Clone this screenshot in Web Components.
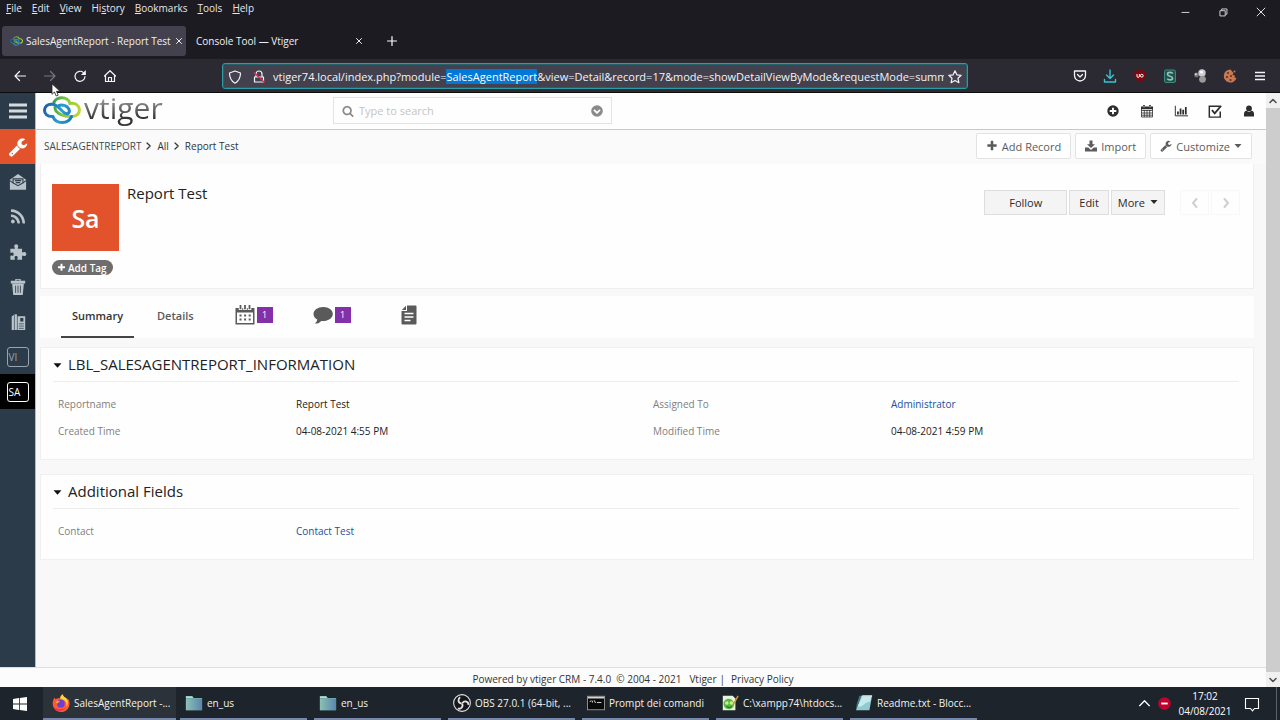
<!DOCTYPE html>
<html lang="en">
<head>
<meta charset="utf-8">
<title>SalesAgentReport - Report Test</title>
<style>
html,body{margin:0;height:100%}
body{font-family:"Open Sans","Noto Sans",sans-serif;font-size:10px;background:#1c1b22;overflow:hidden}
</style>
</head>
<body>
<desktop-screen></desktop-screen>
<script>
const RESET = `*{box-sizing:border-box}
button,input{font:inherit;color:inherit;background:none;border:0;padding:0;margin:0;white-space:nowrap}
a{color:inherit;text-decoration:none}`;

function define(name, css, html, init) {
  const tpl = document.createElement('template');
  tpl.innerHTML = `<style>${RESET}${css}</style>${html}`;
  customElements.define(name, class extends HTMLElement {
    constructor() {
      super();
      this.attachShadow({ mode: 'open' }).append(tpl.content.cloneNode(true));
    }
    connectedCallback() { if (init) init.call(this, this.shadowRoot); }
  });
}

const line = (d, w = 1.4) => `<path d="${d}" fill="none" stroke="currentColor" stroke-width="${w}" stroke-linecap="round" stroke-linejoin="round"/>`;
/* name: [viewBox, markup] */
const ICONS = {
  min: ['0 0 16 16', '<path d="M4 8.500h9" stroke="currentColor"/>'],
  restore: ['0 0 16 16', '<path d="M4.500 6.500h6v6h-6zM6.500 6V4.500h6v6H11" fill="none" stroke="currentColor"/>'],
  close: ['0 0 16 16', line('M3.500 3.500l9 9M12.500 3.500l-9 9', 1.1)],
  tabclose: ['0 0 16 16', line('M5.500 5.500l5 5M10.500 5.500l-5 5', 1)],
  add: ['0 0 16 16', line('M8 3.500v9M3.500 8h9', 1.2)],
  back: ['0 0 16 16', line('M13.500 8H3M7.500 3.500L3 8l4.500 4.500', 1.2)],
  forward: ['0 0 16 16', line('M2.500 8H13M8.500 3.500L13 8l-4.500 4.500', 1.2)],
  reload: ['0 0 16 16', line('M13 8.500a5 5 0 1 1-1.600-3.900L13 6', 1.2) + '<path d="M13.800 2v5H9z" fill="currentColor"/>'],
  home: ['0 0 16 16', line('M2.500 8L8 2.700 13.500 8M3.500 7.300v6.200h9V7.300M6.500 13V9.500h3V13', 1.2)],
  shield: ['0 0 16 16', line('M8 2l5.500 2c0 5-1.500 8-5.500 10.200C4 12 2.500 9 2.500 4z', 1.2)],
  lock: ['0 0 16 16', line('M3.500 8h9v5h-9zM5 8V5a3 3 0 0 1 6 0v3', 1.2) + '<path d="M3 3.500L13.500 13.500" stroke="#e22850" stroke-width="1.400"/>'],
  star: ['0 0 16 16', line('M8 1.800l1.900 4 4.300.5-3.200 3 .9 4.400L8 11.500l-3.900 2.200.9-4.400-3.200-3 4.300-.5z', 1.2)],
  pocket: ['0 0 16 16', line('M2.500 3h11v4.500a5.500 5.500 0 0 1-11 0zM5.500 6.500L8 9l2.500-2.500', 1.3)],
  dl: ['0 0 16 16', line('M8 2v8M4.500 7L8 10.500 11.500 7M2.500 11.500V14h11v-2.500', 1.4)],
  ublock: ['0 0 16 16', '<path d="M8 1.500l5.800 2c0 6-1.300 8.500-5.800 11-4.500-2.500-5.800-5-5.800-11z" fill="#800610"/><path d="M5 6v2.200a1 1 0 0 0 2.400 0V6" fill="none" stroke="#fff"/><circle cx="9.800" cy="7.700" r="1.400" fill="none" stroke="#fff"/>'],
  stylus: ['0 0 16 16', '<rect x="2.500" y="2" width="11" height="12.500" rx="1.500" fill="#24504f" stroke="#3f8a80"/><path d="M10.800 5.500Q10 4.300 8 4.300 5.500 4.300 5.500 6.200C5.500 8.700 10.600 7.800 10.600 10.200 10.600 12.300 6.300 12.400 5.300 10.600" fill="none" stroke="#8fc6ba" stroke-width="1.700"/>'],
  balls: ['0 0 16 16', '<circle cx="4.500" cy="7" r="2.400" fill="#777"/><circle cx="3.900" cy="6.300" r="1" fill="#ddd"/><circle cx="10" cy="5" r="3.700" fill="#ccc"/><circle cx="10.500" cy="11.300" r="3.400" fill="#9a9a9a"/><circle cx="9.500" cy="4.200" r="1.400" fill="#fff"/>'],
  cookie: ['0 0 16 16', '<path d="M8.500 1.500a6.500 6.500 0 1 0 6 8.500l-2-.5.500-2-2.500-.5 1-2z" fill="#c87952"/><circle cx="12.500" cy="3.500" r="1" fill="#c87952"/><g fill="#5b3024"><circle cx="6" cy="5" r="1"/><circle cx="5" cy="9" r="1.100"/><circle cx="9" cy="8" r="1"/><circle cx="8.500" cy="12" r="1.100"/></g>'],
  burger: ['0 0 16 16', '<path d="M3 4.500h10M3 8h10M3 11.500h10" stroke="currentColor" stroke-width="1.300"/>'],
  menu: ['0 0 18 18', '<path d="M0 3h18M0 9h18M0 15h18" stroke="currentColor" stroke-width="2.800"/>'],
  wrench: ['0 0 1792 1792', '<path fill="currentColor" d="M448 1472q0-26-19-45t-45-19-45 19-19 45 19 45 45 19 45-19 19-45zm644-420l-682 682q-37 37-90 37-52 0-91-37l-106-108q-38-36-38-90 0-53 38-91l681-681q39 98 114.500 173.500t173.500 114.500zm634-435q0 39-23 106-47 134-164.500 217.500t-258.500 83.500q-185 0-316.500-131.500t-131.500-316.500 131.500-316.500 316.500-131.500q58 0 121.500 16.500t107.500 46.500q16 11 16 28t-16 28l-293 169v224l193 107q5-3 79-48.500t135.500-81 70.500-35.500q15 0 23.500 10t8.500 25z"/>'],
  mail: ['0 0 20 20', '<path fill="currentColor" d="M1 7.500L10 1l9 6.500v11H1z"/><path d="M4.500 6.500h11v4.500L10 14l-5.500-3z" fill="currentColor" stroke="#2c3b49" stroke-width="1.200"/><path d="M6.500 8.500h7M7.500 10.700h5M1 8.500l3.500 2.500M19 8.500L15.500 11" fill="none" stroke="#2c3b49" stroke-width="1.200"/>'],
  rss: ['0 0 1792 1792', '<path fill="currentColor" d="M576 1344q0 80-56 136t-136 56-136-56-56-136 56-136 136-56 136 56 56 136zm512 123q2 28-17 48-18 21-47 21h-135q-25 0-43-16.500t-20-41.500q-22-229-184.500-391.500t-391.500-184.500q-25-2-41.500-20t-16.500-43v-135q0-29 21-47 17-17 43-17h5q160 13 306 80.500t259 181.500q114 113 181.500 259t80.500 306zm512 2q2 27-18 47-18 20-46 20h-143q-26 0-44.500-17.500t-19.500-42.500q-12-215-101-408.500t-231.500-336-336-231.500-408.500-102q-25-1-42.500-19.500t-17.500-43.500v-143q0-28 20-46 18-18 44-18h3q262 13 501.500 120t425.500 294q187 186 294 425.500t120 501.500z"/>'],
  puzzle: ['0 0 20 20', '<path fill="currentColor" d="M1.500 6.500h4.300c.8 0 .9-.6.500-1.300C5.200 3 6.300 1.500 8 1.500S10.800 3 9.900 5c-.4.900-.2 1.500.6 1.500h4v3.300c0 .9.700 1 1.400.6 1.600-1 3.300-.1 3.300 1.800s-1.700 2.900-3.300 1.900c-.7-.4-1.400-.3-1.400.5v4H10c-.9 0-1-.6-.6-1.400.7-1.600-.1-2.700-1.500-2.700s-2.200 1.100-1.500 2.700c.4.800.2 1.400-.6 1.400H1.500v-4c0-.8.600-1 1.300-.7 1.300.6 2.400-.1 2.400-1.500S4.100 10.200 2.800 10.900c-.7.400-1.300.2-1.300-.7z"/>'],
  trash: ['0 0 20 20', '<path fill="currentColor" d="M2 3h5V1h6v2h5v3H2zM3.500 6.500h13L15.300 19H4.700z"/><path d="M7.300 8.500v8M10 8.500v8M12.700 8.500v8" stroke="#2c3b49" stroke-width=".9"/><path d="M8.300 2.500h3.400" stroke="#2c3b49"/>'],
  docs: ['0 0 20 20', '<path fill="currentColor" d="M3 4l2.500-2v17H3zM6.200 1.500h2.600V19H6.200zM9.500 3.500H18V19H9.500z"/><path d="M11 12h5.500M11 14.500h5.500M11 17h5.500" stroke="#2c3b49" stroke-width=".8"/><path d="M12.500 5.500h3.500v4h-3.500z" fill="#2c3b49"/>'],
  search: ['0 0 1792 1792', '<path fill="currentColor" d="M1216 832q0-185-131.500-316.500t-316.500-131.500-316.500 131.500-131.500 316.500 131.500 316.500 316.500 131.500 316.500-131.500 131.500-316.500zm512 832q0 52-38 90t-90 38q-54 0-90-38l-343-342q-179 124-399 124-143 0-273.500-55.500t-225-150-150-225-55.500-273.500 55.500-273.500 150-225 225-150 273.500-55.500 273.500 55.500 225 150 150 225 55.500 273.500q0 220-124 399l343 343q37 37 37 90z"/>'],
  down: ['0 0 12 12', '<circle cx="6" cy="6" r="5.800" fill="currentColor"/><path d="M3 4.800L6 7.800l3-3" fill="none" stroke="#fff" stroke-width="1.800"/>'],
  pluscircle: ['0 0 12 12', '<circle cx="6" cy="6" r="5.700" fill="currentColor"/><path d="M6 2.700v6.600M2.700 6h6.600" stroke="#fff" stroke-width="1.900"/>'],
  calgrid: ['0 0 14 14', '<path d="M1.500 3.500h11v9.500h-11zM1.500 6.500h11M1.500 9h11M1.500 11.200h11M4.300 6v7M7 6v7M9.700 6v7" fill="none" stroke="currentColor" stroke-width=".8"/><path d="M1 2.500h12v2.700H1z" fill="currentColor"/><path d="M4 1v3M10 1v3" stroke="currentColor" stroke-width="2"/><path d="M4 1.500v2M10 1.500v2" stroke="#fff" stroke-width=".8"/>'],
  chart: ['0 0 16 14', '<path d="M1.500 1v11.500H16" fill="none" stroke="currentColor" stroke-width="1.100"/><path d="M4.500 11V7.500M7.500 11V4M10.500 11V5.500M13.500 11V2.500" stroke="currentColor" stroke-width="2"/>'],
  check: ['0 0 16 16', '<path d="M14 8.500V15H1.500V2.500h12" fill="none" stroke="currentColor" stroke-width="1.700"/><path d="M4.500 7l3.200 3.700L15 2" fill="none" stroke="currentColor" stroke-width="2.100"/>'],
  user: ['0 0 12 12', '<circle cx="6" cy="3.400" r="2.900" fill="currentColor"/><path d="M1 11.500V9q0-3 2.500-3.200Q6 8 8.500 5.800 11 6 11 9v2.500z" fill="currentColor"/>'],
  plus: ['0 0 1792 1792', '<path fill="currentColor" d="M1600 736v192q0 40-28 68t-68 28h-416v416q0 40-28 68t-68 28h-192q-40 0-68-28t-28-68v-416h-416q-40 0-68-28t-28-68v-192q0-40 28-68t68-28h416v-416q0-40 28-68t68-28h192q40 0 68 28t28 68v416h416q40 0 68 28t28 68z"/>'],
  import: ['0 0 12 12', '<path fill="currentColor" d="M4.500.5h3v3.800H10L6 8 2 4.300h2.500zM0 7.500h3.300L6 10l2.700-2.500H12v4H0z"/>'],
  caret: ['0 0 8 8', '<path fill="currentColor" d="M.5 2h7L4 6z"/>'],
  left: ['0 0 12 12', line('M7.500 2L4 6l3.500 4', 2)],
  right: ['0 0 12 12', line('M4.500 2L8 6l-3.500 4', 2)],
  crumb: ['0 0 8 10', line('M2 2l3.200 3L2 8', 1.2)],
  calendar: ['0 0 20 20', '<path fill="currentColor" d="M.5 3h19v16.500H.5z"/><path fill="#fff" d="M2 7.500h16V18H2z"/><path d="M5.500.5v4.500M10 .5v4.500M14.500.5v4.500" stroke="#fff" stroke-width="3.600"/><path d="M5.500 0v4.300M10 0v4.300M14.500 0v4.300" stroke="currentColor" stroke-width="1.800"/><path d="M4.500 10.500h11.500M4.500 14.500h11.500" stroke="currentColor" stroke-width="2" stroke-dasharray="2 2.600"/>'],
  comment: ['0 0 20 20', '<path fill="currentColor" d="M10.300 2C4.800 2 .5 5 .5 9c0 2.400 1.500 4.400 3.700 5.600-.2 1.700-1 2.900-2.200 3.900 3 0 5-1 6.200-2.600 6.200.8 11.600-2.400 11.600-6.900C19.800 5 15.700 2 10.300 2z"/>'],
  document: ['0 0 16 20', '<path fill="currentColor" d="M6 .5h8.500q1 0 1 1v17q0 1-1 1h-13q-1 0-1-1V6H6z"/><path fill="currentColor" d="M.8 5L5 .8V5z"/><path d="M3.500 8.500h9M3.500 12h9M3.500 15.500h6" stroke="#fff" stroke-width="1.600"/>'],
  up: ['0 0 12 12', line('M1.500 8L6 3.500 10.500 8', 1.200)],
  sdown: ['0 0 12 12', line('M3 4.500L6 7.500l3-3', 1.6)],
  sup: ['0 0 12 12', line('M3 7.500L6 4.500l3 3', 1.6)],
  win: ['0 0 16 16', '<path fill="#fff" d="M1 3l6-.9v5.500H1zM7.800 2L15 1v6.600H7.800zM1 8.400h6v5.500L1 13zM7.800 8.400H15V15l-7.200-1z"/>'],
  firefox: ['0 0 20 20', '<path fill="#ff5a36" d="M3 4c.2 1 .6 1.600 1.200 2C6 4.500 8 4.500 9 5c0-2 1.500-3.800 3-4.800.3 1.900 1.300 2.800 2.800 3.800.9.600 1.700 1.300 2.100 2.300.4-.3.600-.9.500-1.500C20 8 20 12 18.500 15A9.500 9.500 0 0 1 1.300 14C.2 11 .8 6.500 3 4z"/><path fill="#ffd43a" d="M12 .2c.3 1.900 1.300 2.800 2.800 3.800 3.200 2.200 4 7 1.200 10.500 1-4-1-7.500-4-8.500-1.300-.4-2.400-.5-3-1 0-2 1.500-3.800 3-4.800z"/><path fill="#f0246b" d="M1.300 14c3 3 8.200 4.500 13 1.500-2 3.500-9 5.500-13-1.500z"/><circle cx="9.800" cy="10.800" r="4.300" fill="#6b3fd4"/><path fill="#ffa21f" d="M4.500 8c1.500-.8 3-.5 4.500.3-.7 1-2.300.8-2.600 2.200C5 10.500 4.300 9.500 4.500 8z"/>'],
  folder: ['0 0 20 18', '<defs><linearGradient id="f"><stop offset="0" stop-color="#8cc0b4"/><stop offset="1" stop-color="#5a86b0"/></linearGradient></defs><path fill="#6fa8a6" d="M1 1.500h7l1.500 2H19V17H1z"/><path fill="#b5dcd2" d="M1 1.500h7l1.500 2H1z"/><path fill="url(#f)" d="M1 4.500h18V17H1z"/>'],
  obs: ['0 0 20 20', '<circle cx="10" cy="10" r="9.300" fill="#17171b" stroke="#e4e4e4" stroke-width="1.200"/><path d="M9.500 10.500C5 10 5.500 5 8 3.500M10.500 10c2.500-3.500 7-1 6.500 2M10 10.500c2 3.500-1.500 7-4.500 5.500" fill="none" stroke="#e4e4e4" stroke-width="2"/>'],
  cmd: ['0 0 20 16', '<rect x=".5" y=".5" width="19" height="15" fill="#0a0a0a" stroke="#9a9a9a"/><path fill="#d5d5d5" d="M1 1h18v2H1z"/><path d="M3 6.500l2-1M6 5.500v2M8 5l1.500 3M11 7.500h5" stroke="#eee"/>'],
  notepadpp: ['0 0 20 20', '<path fill="#e8f2dd" d="M2 2h11l3 3v13H2z"/><path fill="#58b947" d="M3 9c2-5 9-5 11 0 2 4-1 8-5 8s-7-3-6-8z"/><circle cx="6.500" cy="10" r="2" fill="#c9f08a"/><circle cx="11.500" cy="10" r="2" fill="#c9f08a"/><path d="M6 14q3 2 6 0" stroke="#1d5a1d" fill="none"/><path d="M19 2l-6 11" stroke="#c99a3a" stroke-width="1.600"/>'],
  notepad: ['0 0 20 20', '<path fill="#8fcbd0" d="M7 2h12l-3 16H1z"/><path fill="#c7e9ea" d="M8 3h10l-1 5q-5 1-10 6H3z"/><path fill="#3f7d8c" d="M7 2L1 18l1-7 3-9z"/><path d="M8 2.200h11" stroke="#e9e9e9" stroke-width="1.500"/>'],
  stop: ['0 0 14 14', '<circle cx="7" cy="7" r="6.800" fill="#c2002f"/><path d="M3.500 7h7" stroke="#fff" stroke-width="2"/>'],
  note: ['0 0 16 16', '<path d="M1.500 2.500h13v10h-4l-2 2.300-2-2.300h-5z" fill="none" stroke="currentColor" stroke-width="1.100"/>'],
  cursor: ['0 0 10 14', '<path d="M1 .8v10.500l2.500-2.300 1.700 4 2-.8-1.700-3.900H9z" fill="#fff" stroke="#222" stroke-width=".8"/>'],
  cloud: ['0 0 38 28', `<defs><linearGradient id="a" gradientUnits="userSpaceOnUse" x1="1" x2="29" y1="12" y2="22"><stop offset="0" stop-color="#1a5fa8"/><stop offset=".6" stop-color="#2a9fd2"/><stop offset="1" stop-color="#1d78b8"/></linearGradient><linearGradient id="b" gradientUnits="userSpaceOnUse" x1="9" x2="36" y1="6" y2="12"><stop offset="0" stop-color="#2f9b4e"/><stop offset=".5" stop-color="#8cc63f"/><stop offset="1" stop-color="#bcd530"/></linearGradient></defs>
  <g fill="none" stroke-width="3" stroke-linecap="round"><path stroke="url(#b)" d="M10.500 8C12 .2 24.500-.5 27 7.500 38.500 5.500 39.500 20 29.500 20.500 22 21 12 18 12 11.500"/><path stroke="url(#a)" d="M10 20.500C12.500 28.500 25.500 28.500 28.500 20.500M10 20.500C-1.500 21.500-1 7 9.500 8.300 17 9 20 19.500 25 17.500 28 15.500 25.500 10.500 21.500 9.500 18 8.500 15.500 9.500 14.500 10.500"/></g>`]
};
customElements.define('ui-icon', class extends HTMLElement {
  static get observedAttributes() { return ['name']; }
  constructor() { super(); this.attachShadow({ mode: 'open' }); }
  attributeChangedCallback(attr, old, name) {
    const [box, art] = ICONS[name];
    this.shadowRoot.innerHTML = `<style>:host{display:inline-block;flex:none;width:16px;height:16px}svg{display:block;width:100%;height:100%}</style><svg viewBox="${box}" aria-hidden="true">${art}</svg>`;
  }
});

/* ---------- browser chrome ---------- */
define('menu-bar', `
:host{display:flex;justify-content:space-between;height:24px;color:#e6e6ea;font-size:10px;line-height:16px}
nav{display:flex;gap:10px;padding-left:6px;align-items:flex-start}
.win{display:flex}.win button{width:38px;height:24px;display:grid;place-items:center}
.win ui-icon{width:14px;height:14px}`, `
<nav><button><u>F</u>ile</button><button><u>E</u>dit</button><button><u>V</u>iew</button><button>Hi<u>s</u>tory</button><button><u>B</u>ookmarks</button><button><u>T</u>ools</button><button><u>H</u>elp</button></nav>
<div class="win"><button aria-label="Minimize"><ui-icon name="min"></ui-icon></button><button aria-label="Restore"><ui-icon name="restore"></ui-icon></button><button aria-label="Close"><ui-icon name="close"></ui-icon></button></div>`);

define('browser-tab', `
:host{display:flex;align-items:center;width:184px;height:30px;padding:0 5px 0 8px;border-radius:3px;color:#f0f0f4;font-size:10px}
:host([active]){background:#42414d}
span{flex:1;white-space:nowrap}
::slotted(ui-icon){margin-right:3px}
button{width:16px;height:16px}`, `<slot name="icon"></slot><span><slot></slot></span><button aria-label="Close tab"><ui-icon name="tabclose"></ui-icon></button>`);

define('tab-strip', `
:host{display:flex;align-items:center;gap:2px;height:35px;padding:2px 2px 3px;color:#fbfbfe}
.fav{width:13px;height:12px}.new{width:36px;height:16px;display:grid;place-items:center}`, `
<browser-tab active><ui-icon slot="icon" class="fav" name="cloud"></ui-icon>SalesAgentReport - Report Test</browser-tab>
<browser-tab>Console Tool — Vtiger</browser-tab>
<button class="new" aria-label="New tab"><ui-icon name="add"></ui-icon></button>`);

define('url-field', `
:host{display:flex;align-items:center;height:26px;padding:1px 4px 0;border:1px solid #2b9da6;outline:1px solid #24626b;outline-offset:-2px;border-radius:3px;background:#42414d;color:#f4f4f8}
ui-icon+ui-icon{margin:0 6px 0 8px}
input{flex:1;min-width:0;height:20px;margin-right:3px;font-size:11px;outline:0;caret-color:transparent}
input::selection{background:#0078d7;color:#fff}`, `
<ui-icon name="shield"></ui-icon><ui-icon name="lock"></ui-icon>
<input type="text" aria-label="Address" spellcheck="false" value="vtiger74.local/index.php?module=SalesAgentReport&amp;view=Detail&amp;record=17&amp;mode=showDetailViewByMode&amp;requestMode=summary">
<ui-icon name="star"></ui-icon>`, function (root) {
  const input = root.querySelector('input');
  const from = input.value.indexOf('SalesAgentReport');
  input.focus({ preventScroll: true });
  input.setSelectionRange(from, from + 'SalesAgentReport'.length);
});

define('browser-toolbar', `
:host{display:flex;align-items:center;height:34px;padding:1px 5px 0;background:#2b2a33;border-bottom:1px solid #0c0c0d;color:#f4f4f8;position:relative}
.group{display:flex}.group button{width:30px;height:26px;display:grid;place-items:center}
.off{color:#77767f}.teal{color:#31c8d4}
url-field{flex:1;margin:0 97px}
.pointer{position:absolute;left:51px;top:24px;width:10px;height:14px;z-index:3}`, `
<div class="group"><button aria-label="Back"><ui-icon name="back"></ui-icon></button><button class="off" aria-label="Forward"><ui-icon name="forward"></ui-icon></button><button aria-label="Reload"><ui-icon name="reload"></ui-icon></button><button aria-label="Home"><ui-icon name="home"></ui-icon></button></div>
<url-field></url-field>
<div class="group"><button aria-label="Pocket"><ui-icon name="pocket"></ui-icon></button><button class="teal" aria-label="Downloads"><ui-icon name="dl"></ui-icon></button><button aria-label="Blocker"><ui-icon name="ublock"></ui-icon></button><button aria-label="Styles"><ui-icon name="stylus"></ui-icon></button><button aria-label="Extension"><ui-icon name="balls"></ui-icon></button><button aria-label="Cookies"><ui-icon name="cookie"></ui-icon></button><button aria-label="Menu"><ui-icon name="burger"></ui-icon></button></div>
<ui-icon class="pointer" name="cursor"></ui-icon>`);

/* ---------- CRM ---------- */
define('crm-sidebar', `
:host{display:flex;flex-direction:column;width:36px;background:#2c3b49;border-right:1px solid #b4bbc1;color:#b9c3ca}
a{height:35px;display:grid;place-items:center}
.menu{height:36px;color:#d3dbe0}
ui-icon{width:18px;height:18px}
.on{background:#e2532b;color:#fff}.on ui-icon{width:20px;height:20px}
.now{background:#000;color:#fff}
b{width:22px;height:20px;border:1px solid currentColor;border-radius:3px;font:10px/18px "Open Sans",sans-serif;padding-left:1px}
.dim{color:#98a4ae}`, `
<a class="menu" href="#menu" aria-label="Menu"><ui-icon name="menu"></ui-icon></a><a class="on" href="#tools" aria-label="Tools"><ui-icon name="wrench"></ui-icon></a><a href="#mail" aria-label="Mail"><ui-icon name="mail"></ui-icon></a><a href="#rss" aria-label="RSS"><ui-icon name="rss"></ui-icon></a><a href="#ext" aria-label="Extensions"><ui-icon name="puzzle"></ui-icon></a><a href="#bin" aria-label="Recycle bin"><ui-icon name="trash"></ui-icon></a><a href="#docs" aria-label="Templates"><ui-icon name="docs"></ui-icon></a><a class="dim" href="#vi"><b>VI</b></a><a class="now" href="#sa"><b>SA</b></a>`);

define('crm-header', `
:host{display:flex;align-items:center;height:37px;background:#fefefe;border-bottom:1px solid #a8dcb8;padding:0 0 1px 7px;color:#2d2d2d}
.logo{display:flex;align-items:center;width:290px;gap:3px}
.logo ui-icon{width:38px;height:28px;margin-bottom:2px}
.logo span{font-size:30px;font-weight:500;line-height:36px;margin-top:-6px;background:linear-gradient(#999 25%,#333 80%);background-clip:text;-webkit-background-clip:text;color:transparent}
.search{display:flex;align-items:center;gap:5px;width:279px;height:27px;padding:0 8px;border:1px solid #e4e4e4;color:#8a8a8a}
.search input{flex:1;min-width:0;font-size:11px;outline:0}.search input::placeholder{color:#c4c4c4;opacity:1}
.search ui-icon{width:12px;height:12px}
.tools{display:flex;margin-left:auto}.tools button{width:34px;height:24px;display:grid;place-items:center}
.tools ui-icon{width:14px;height:14px}.tools .s{width:12px;height:12px}`, `
<a class="logo" href="#home"><ui-icon name="cloud"></ui-icon><span>vtiger</span></a>
<div class="search"><ui-icon name="search"></ui-icon><input type="text" aria-label="Search" placeholder="Type to search"><ui-icon name="down"></ui-icon></div>
<div class="tools"><button aria-label="Quick create"><ui-icon class="s" name="pluscircle"></ui-icon></button><button aria-label="Calendar"><ui-icon name="calgrid"></ui-icon></button><button aria-label="Reports"><ui-icon name="chart"></ui-icon></button><button aria-label="Tasks"><ui-icon name="check"></ui-icon></button><button aria-label="User"><ui-icon class="s" name="user"></ui-icon></button></div>`);

define('module-bar', `
:host{display:flex;align-items:center;justify-content:space-between;height:34px;padding:0 14px 2px 8px;background:#fafafa;color:#333}
.crumbs{display:flex;align-items:center;gap:4px;font-size:10px}
.crumbs ui-icon{width:8px;height:10px}
.mod{color:#3f4a54}
.acts{display:flex;gap:4px}
.acts button{display:flex;align-items:center;justify-content:center;gap:4px;height:26px;border:1px solid #e3e3e3;border-radius:2px;background:#fff;color:#5c5c5c;font-size:11px;padding:0 9px}
.acts ui-icon{width:12px;height:12px}.acts .c{width:8px;height:8px}`, `
<nav class="crumbs"><a class="mod" href="#module">SALESAGENTREPORT</a><ui-icon name="crumb"></ui-icon><a href="#all">All</a><ui-icon name="crumb"></ui-icon><a href="#record">Report Test</a></nav>
<div class="acts"><button><ui-icon name="plus"></ui-icon>Add Record</button><button><ui-icon name="import"></ui-icon>Import</button><button><ui-icon name="wrench"></ui-icon>Customize<ui-icon class="c" name="caret"></ui-icon></button></div>`);

define('record-summary', `
:host{display:flex;align-items:flex-start;height:125px;padding:20px 13px 0 11px;background:#fefefe;border:1px solid #efefef;border-top:0}
.id{width:67px;margin-right:8px}
.av{height:67px;background:#e2532b;color:#fff;font-size:25px;font-weight:600;line-height:69px;text-align:center}
.tag{display:flex;align-items:center;gap:2px;width:61px;height:15px;margin-top:9px;padding:0 5px;border-radius:8px;background:#6d6d6d;color:#fff;font-weight:600;font-size:10px}
.tag ui-icon{width:9px;height:9px}
h1{margin:0;font-size:15px;font-weight:400;line-height:18px;color:#222}
.acts{display:flex;gap:2px;margin:6px 0 0 auto}
.acts button{height:25px;padding:0 9px 1px;border:1px solid #dedede;background:#f4f4f4;color:#2a2a2a;font-size:11px}
.acts .f{padding:0 24px 1px}.acts .m{display:flex;align-items:center;gap:5px;padding:0 6px 1px}
.m ui-icon{width:8px;height:8px}
.acts .n{width:29px;display:grid;place-items:center;padding:0;background:#fefefe;border-color:#f8f8f8;color:#cfcfcf}
.n ui-icon{width:12px;height:12px}.acts .first{margin-left:13px}`, `
<div class="id"><div class="av">Sa</div><button class="tag"><ui-icon name="plus"></ui-icon>Add Tag</button></div>
<h1>Report Test</h1>
<div class="acts"><button class="f">Follow</button><button>Edit</button><button class="m">More<ui-icon name="caret"></ui-icon></button><button class="n first" aria-label="Previous"><ui-icon name="left"></ui-icon></button><button class="n" aria-label="Next"><ui-icon name="right"></ui-icon></button></div>`);

define('record-tabs', `
:host{display:flex;gap:12px;height:42px;margin-top:7px;padding-left:21px;background:#fefefe;font-size:11px;font-weight:600;color:#5a5a5a}
a{display:flex;align-items:center;height:42px;padding:0 11px 2px;border-bottom:2px solid transparent}
.on{color:#333;border-color:#444}
a.i{padding:0 0 2px;width:66px;gap:2px}.i ui-icon{width:20px;height:20px}
a.first{margin-left:18px}
a.doc{margin-left:10px}
.i ui-icon.d{width:16px}
b{width:16px;height:16px;background:#8430a8;color:#fff;font-size:9px;font-weight:400;line-height:16px;text-align:center}`, `
<a class="on" href="#summary">Summary</a><a href="#details">Details</a><a class="i first" href="#events" aria-label="Activities"><ui-icon name="calendar"></ui-icon><b>1</b></a><a class="i" href="#comments" aria-label="Comments"><ui-icon name="comment"></ui-icon><b>1</b></a><a class="i doc" href="#files" aria-label="Documents"><ui-icon class="d" name="document"></ui-icon></a>`);

define('info-block', `
:host{display:block;background:#fefefe;border:1px solid #f0f0f0;padding-bottom:14px}
h2{display:flex;align-items:center;gap:6px;height:34px;margin:0 14px 9px 12px;padding-bottom:2px;border-bottom:1px solid #ededed;font-size:15px;font-weight:400;color:#222}
h2 ui-icon{width:9px;height:9px;margin-top:4px;color:#111}
dl{display:grid;grid-template-columns:2fr 3fr 2fr 3fr;margin:0 5px 0 17px;font-size:10px;line-height:27px}
::slotted(dt){color:#808080}::slotted(dd){margin:0;color:#222}`, `<h2><ui-icon name="caret"></ui-icon><slot name="title"></slot></h2><dl><slot></slot></dl>`);

define('record-view', `
:host{display:block;padding:0 12px 0 4px}
info-block{margin-top:9px}info-block+info-block{margin-top:14px}
dd a{color:#1a4f9c}`, `
<record-summary></record-summary><record-tabs></record-tabs>
<info-block><span slot="title">LBL_SALESAGENTREPORT_INFORMATION</span>
<dt>Reportname</dt><dd>Report Test</dd><dt>Assigned To</dt><dd><a href="#admin">Administrator</a></dd><dt>Created Time</dt><dd>04-08-2021 4:55 PM</dd><dt>Modified Time</dt><dd>04-08-2021 4:59 PM</dd></info-block>
<info-block><span slot="title">Additional Fields</span><dt>Contact</dt><dd><a href="#contact">Contact Test</a></dd></info-block>`);

define('crm-footer', `
:host{display:flex;justify-content:center;align-items:center;gap:3px;height:20px;border-top:1px solid #dedede;background:#fcfcfc;color:#333;font-size:10px;padding-top:2px}
a.v{margin-left:5px}a.p{margin-left:3px}`, `<span>Powered by vtiger CRM - 7.4.0&nbsp; © 2004 - 2021</span><a class="v" href="#vtiger">Vtiger</a><span>|</span><a class="p" href="#privacy">Privacy Policy</a>`);

define('page-scrollbar', `
:host{display:flex;flex-direction:column;width:14px;background:#f0f0f0;color:#505050}
i{flex:1;background:#cdcdcd}button{height:15px;display:grid;place-items:center}
ui-icon{width:12px;height:12px}`, `<button aria-label="Scroll up"><ui-icon name="sup"></ui-icon></button><i></i><button aria-label="Scroll down"><ui-icon name="sdown"></ui-icon></button>`);

define('crm-page', `
:host{display:flex;background:#f8f8f8}
.app{flex:1;display:flex;flex-direction:column;min-width:0}
.body{flex:1;display:flex;min-height:0}
main{flex:1;min-width:0}`, `
<div class="app"><div class="body"><crm-sidebar></crm-sidebar><main><crm-header></crm-header><module-bar></module-bar><record-view></record-view></main></div><crm-footer></crm-footer></div><page-scrollbar></page-scrollbar>`);

/* ---------- taskbar ---------- */
define('task-item', `
:host{display:block;width:134px;padding:0 4px 0 3px}
:host([active]){padding:0 1px 0 0}
button{display:flex;align-items:center;gap:4px;width:100%;height:33px;padding:0 0 0 5px;border-bottom:2px solid #7788ab;color:#f2f2f2;font-size:10px}
:host([active]) button{background:#2b323a;padding-left:9px}
ui-icon{width:18px;height:18px}`, `<button><ui-icon></ui-icon><span><slot></slot></span></button>`, function (root) {
  root.querySelector('ui-icon').setAttribute('name', this.getAttribute('icon'));
});

define('task-bar', `
:host{display:flex;height:33px;background:#1e242b;color:#fff}
.start{width:43px;display:grid;place-items:center;padding-right:3px}
.tray{display:flex;align-items:center;margin-left:auto;border-right:1px solid #59616a;margin-right:3px;padding-right:14px}
.tray button{width:20px;height:20px;display:grid;place-items:center}
.tray ui-icon{width:13px;height:13px}
.tray .n ui-icon{width:16px;height:16px}
time{width:60px;margin:0 7px 0 1px;font-size:10px;line-height:15px;text-align:center}`, `
<button class="start" aria-label="Start"><ui-icon name="win"></ui-icon></button>
<task-item active icon="firefox">SalesAgentReport -...</task-item><task-item icon="folder">en_us</task-item><task-item icon="folder">en_us</task-item><task-item icon="obs">OBS 27.0.1 (64-bit, ...</task-item><task-item icon="cmd">Prompt dei comandi</task-item><task-item icon="notepadpp">C:\\xampp74\\htdocs...</task-item><task-item icon="notepad">Readme.txt - Blocc...</task-item>
<div class="tray"><button aria-label="Hidden icons"><ui-icon name="up"></ui-icon></button><button aria-label="Status"><ui-icon name="stop"></ui-icon></button><time>17:02<br>04/08/2021</time><button class="n" aria-label="Notifications"><ui-icon name="note"></ui-icon></button></div>`);

define('desktop-screen', `
:host{display:flex;flex-direction:column;min-height:100vh}
crm-page{flex:1}`, `<menu-bar></menu-bar><tab-strip></tab-strip><browser-toolbar></browser-toolbar><crm-page></crm-page><task-bar></task-bar>`);
</script>
</body>
</html>
